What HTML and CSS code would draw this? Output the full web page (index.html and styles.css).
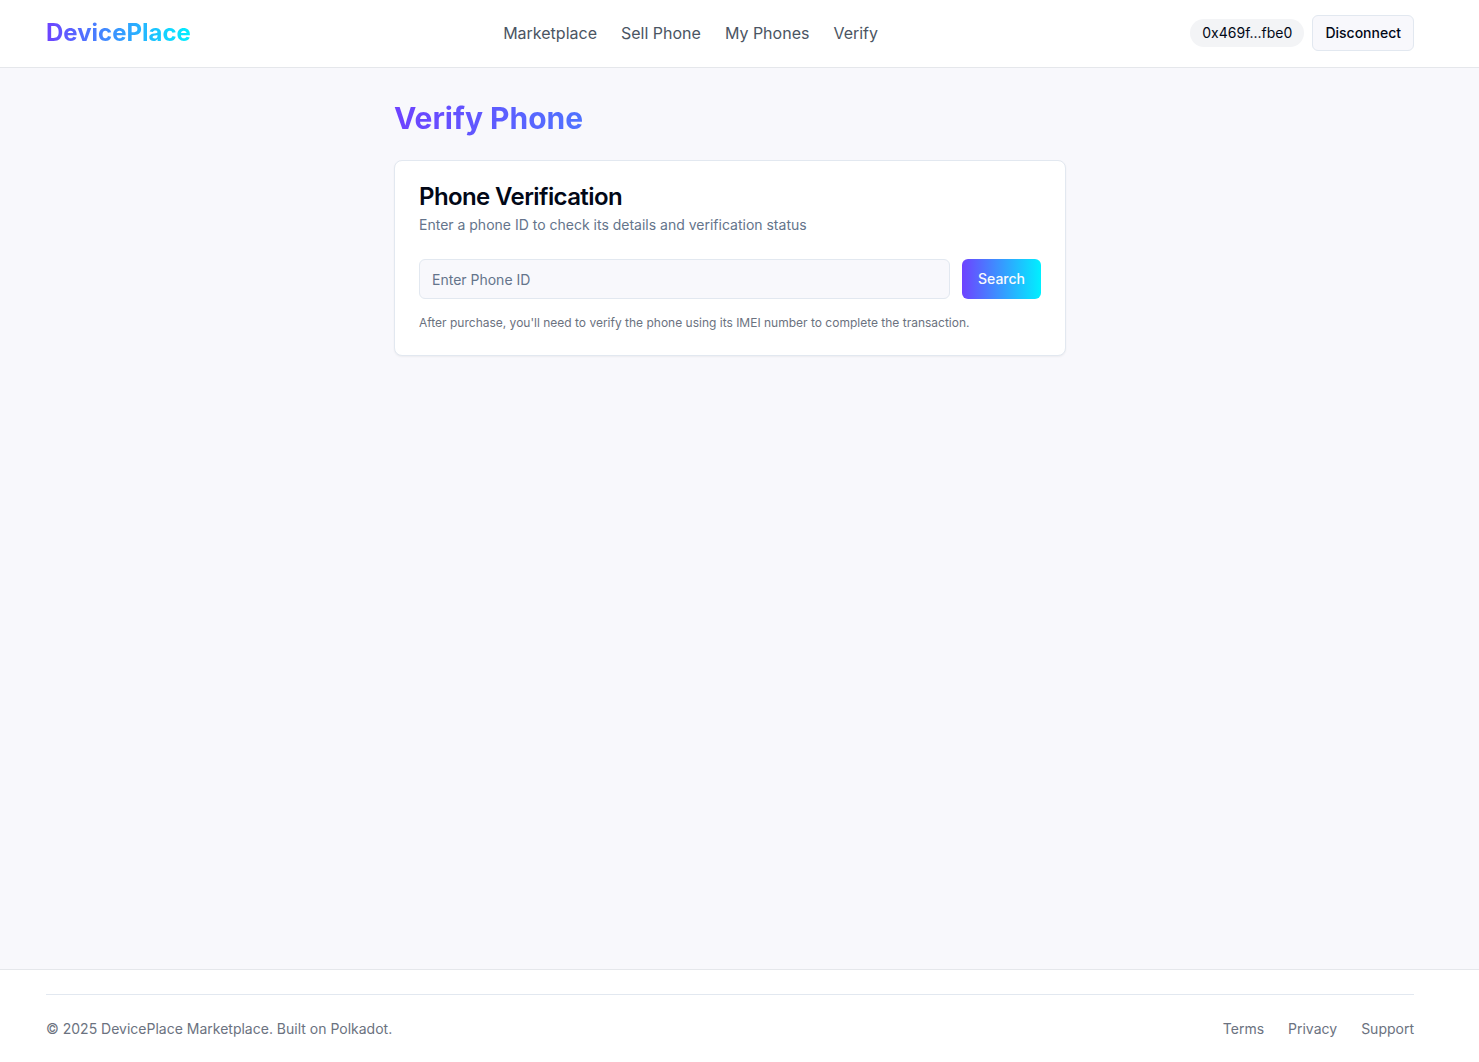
FILE: index.html
```html
<!DOCTYPE html>
<html lang="en">
<head>
  <meta charset="utf-8">
  <meta name="viewport" content="width=device-width, initial-scale=1">
  <title>DevicePlace</title>
  <link rel="stylesheet" href="styles.css">
</head>
<body>
  <header class="site-header">
    <div class="container header-row">
      <a class="logo gradient-text" href="#">DevicePlace</a>
      <nav class="main-nav">
        <a href="#">Marketplace</a>
        <a href="#">Sell Phone</a>
        <a href="#">My Phones</a>
        <a href="#">Verify</a>
      </nav>
      <div class="wallet">
        <span class="address">0x469f...fbe0</span>
        <button class="button button-outline" type="button">Disconnect</button>
      </div>
    </div>
  </header>
  <main class="page">
    <div class="column">
      <h1 class="page-title gradient-text">Verify Phone</h1>
      <section class="card">
        <div class="card-header">
          <h2 class="card-title">Phone Verification</h2>
          <p class="card-description">Enter a phone ID to check its details and verification status</p>
        </div>
        <form class="search-form">
          <input class="input" type="text" placeholder="Enter Phone ID" aria-label="Phone ID">
          <button class="button button-primary" type="submit">Search</button>
        </form>
        <p class="hint">After purchase, you'll need to verify the phone using its IMEI number to complete the transaction.</p>
      </section>
    </div>
  </main>
  <footer class="site-footer">
    <div class="container">
      <div class="footer-row">
        <p class="copyright">© 2025 DevicePlace Marketplace. Built on Polkadot.</p>
        <nav class="footer-nav">
          <a href="#">Terms</a>
          <a href="#">Privacy</a>
          <a href="#">Support</a>
        </nav>
      </div>
    </div>
  </footer>
</body>
</html>
```
FILE: styles.css
```css
:root {
  --gutter: 19px;
  --border: #e2e8f0;
  --surface: #f8f8fc;
  --gradient: linear-gradient(90deg, #6e42ff, #00f0ff);
}

*,
*::before,
*::after {
  box-sizing: border-box;
}

body {
  display: flex;
  flex-direction: column;
  min-height: 100vh;
  margin: 0;
  background: var(--surface);
  color: #020817;
  font-family: Inter, "Liberation Sans", sans-serif;
  font-size: 16px;
  line-height: 24px;
}

h1,
h2,
p {
  margin: 0;
}

a {
  color: inherit;
  text-decoration: none;
}

.container {
  width: 100%;
  max-width: 1400px;
  margin: 0 auto;
  padding: 0 16px;
}

.gradient-text {
  background: var(--gradient);
  background-clip: text;
  -webkit-background-clip: text;
  color: transparent;
}

.site-header {
  padding: 15px var(--gutter) 16px 0;
  border-bottom: 1px solid #e5e7eb;
  background: #fff;
}

.header-row {
  display: flex;
  align-items: center;
  justify-content: space-between;
}

.logo {
  font-size: 24px;
  font-weight: 700;
  line-height: 32px;
}

.main-nav {
  display: flex;
  gap: 24px;
  color: #4b5563;
}

.wallet {
  display: flex;
  align-items: center;
  gap: 8px;
}

.address {
  padding: 4px 12px;
  border-radius: 14px;
  background: #f3f4f6;
  font-size: 14px;
  line-height: 20px;
}

.button {
  border: 0;
  border-radius: 6px;
  font: 500 14px/20px Inter, "Liberation Sans", sans-serif;
  cursor: pointer;
}

.button-outline {
  height: 36px;
  padding: 0 12px;
  border: 1px solid var(--border);
  background: var(--surface);
  color: #020817;
}

.button-primary {
  height: 40px;
  padding: 0 16px;
  background: var(--gradient);
  color: #f8fafc;
}

.page {
  flex: 1;
  padding: 32px calc(16px + var(--gutter)) 32px 16px;
}

.column {
  max-width: 672px;
  margin: 0 auto;
}

.page-title {
  margin-bottom: 24px;
  font-size: 30px;
  font-weight: 700;
  line-height: 36px;
}

.card {
  padding: 24px;
  border: 1px solid var(--border);
  border-radius: 8px;
  background: #fff;
  box-shadow: 0 1px 2px rgb(0 0 0 / 5%);
}

.card-header {
  margin-bottom: 24px;
}

.card-title {
  margin-bottom: 6px;
  font-size: 24px;
  font-weight: 600;
  line-height: 24px;
  letter-spacing: -0.025em;
}

.card-description {
  color: #64748b;
  font-size: 14px;
  line-height: 20px;
}

.search-form {
  display: flex;
  gap: 12px;
  margin-bottom: 16px;
}

.input {
  flex: 1;
  min-width: 0;
  height: 40px;
  padding: 8px 12px;
  border: 1px solid var(--border);
  border-radius: 6px;
  background: var(--surface);
  color: inherit;
  font: 14px/20px Inter, "Liberation Sans", sans-serif;
}

.input::placeholder {
  color: #64748b;
}

.hint {
  color: #6b7280;
  font-size: 12px;
  line-height: 16px;
}

.site-footer {
  padding: 24px var(--gutter) 23px 0;
  border-top: 1px solid #e5e7eb;
  background: #fff;
}

.footer-row {
  display: flex;
  align-items: center;
  justify-content: space-between;
  padding-top: 24px;
  border-top: 1px solid var(--border);
  color: #6b7280;
  font-size: 14px;
  line-height: 20px;
}

.footer-nav {
  display: flex;
  gap: 24px;
}
```
